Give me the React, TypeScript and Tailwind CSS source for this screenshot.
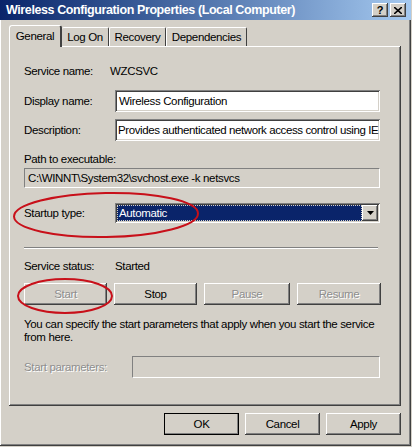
import React from "react";

const font = { fontFamily: '"Liberation Sans", Arial, sans-serif' };

const raised =
  "shadow-[inset_-1px_-1px_#404040,inset_1px_1px_#ffffff,inset_-2px_-2px_#808080,inset_2px_2px_#d4d0c8]";
const sunken =
  "shadow-[inset_1px_1px_#808080,inset_-1px_-1px_#ffffff,inset_2px_2px_#404040,inset_-2px_-2px_#d4d0c8]";

function Btn({ label, disabled, width, isDefault }: { label: string; disabled?: boolean; width: string; isDefault?: boolean }) {
  return (
    <div className={`${width} shrink-0 h-[22px] ${isDefault ? "outline outline-1 outline-black -outline-offset-1" : ""} bg-[#d4d0c8] ${raised} flex items-center justify-center ${disabled ? "text-[#8e8e8e] [text-shadow:1px_1px_0_#ffffff]" : "text-black"}`}>
      {label}
    </div>
  );
}

export default function App() {
  return (
    <div style={font} className="relative w-[412px] h-[447px] bg-[#d4d0c8] text-black text-[11.5px] tracking-[-0.35px] leading-[14px] overflow-hidden">
      <div className={`w-[411px] h-[446px] flex flex-col px-[2px] ${raised}`}>
        {/* Title bar */}
        <div className="h-[20px] -mx-[2px] flex items-center bg-gradient-to-r from-[#0a246a] to-[#a6caf0] pl-[6px] pr-[5px]">
          <span className="text-white font-bold text-[12.5px] tracking-[-0.4px] flex-1">Wireless Configuration Properties (Local Computer)</span>
          <div className={`w-[16px] h-[14px] bg-[#d4d0c8] ${raised} flex items-center justify-center text-[11px] font-bold leading-none tracking-normal`}>?</div>
          <div className={`ml-[2px] w-[16px] h-[14px] bg-[#d4d0c8] ${raised} flex items-center justify-center`}>
            <svg width="8" height="7" viewBox="0 0 8 7">
              <path d="M0 0 L8 7 M8 0 L0 7" stroke="#000" strokeWidth="1.6" />
            </svg>
          </div>
        </div>

        {/* Tabs */}
        <div className="mt-[5px] ml-[7px] h-[21px] flex items-end relative z-10">
          <div className="w-[53px] h-[22px] -mb-[1px] bg-[#d4d0c8] border-t border-l border-white border-r-2 border-r-[#404040] rounded-t-[3px] flex items-center justify-center pb-[2px]">General</div>
          <div className="w-[47px] h-[19px] border-t border-white border-r border-r-[#404040] rounded-t-[2px] flex items-center justify-center">Log On</div>
          <div className="w-[57px] h-[19px] border-t border-l border-white border-r border-r-[#404040] rounded-t-[2px] flex items-center justify-center">Recovery</div>
          <div className="w-[81px] h-[19px] border-t border-l border-white border-r border-r-[#404040] rounded-t-[2px] flex items-center justify-center">Dependencies</div>
        </div>

        {/* Panel */}
        <div className={`ml-[7px] w-[392px] h-[360px] ${raised} flex flex-col pl-[15px] pr-[21px]`}>
          <div className="mt-[16px] h-[18px] flex items-center">
            <span className="w-[86px] shrink-0">Service name:</span>
            <span>WZCSVC</span>
          </div>
          <div className="mt-[10px] h-[22px] flex items-center">
            <span className="w-[91px] shrink-0">Display name:</span>
            <div className={`flex-1 h-[22px] bg-white ${sunken} flex items-center pl-[4px]`}>Wireless Configuration</div>
          </div>
          <div className="mt-[7px] h-[22px] flex items-center">
            <span className="w-[91px] shrink-0">Description:</span>
            <div className={`flex-1 min-w-0 h-[22px] bg-white ${sunken} flex items-center pl-[3px] whitespace-nowrap tracking-[-0.4px]`}>Provides authenticated network access control using IE</div>
          </div>
          <div className="mt-[11px] h-[14px] flex items-center">Path to executable:</div>
          <div className="mt-[2px] h-[20px] border border-[#808080] border-r-white border-b-white flex items-center pl-[3px]">C:\WINNT\System32\svchost.exe -k netsvcs</div>
          <div className="mt-[15px] h-[20px] flex items-center">
            <span className="w-[91px] shrink-0">Startup type:</span>
            <div className={`flex-1 h-[20px] bg-white ${sunken} p-[2px] flex`}>
              <div className="flex-1 bg-[#0a246a] text-white flex items-center pl-[2px] outline outline-1 outline-dotted outline-[#d4d0c8] -outline-offset-1">Automatic</div>
              <div className={`w-[16px] bg-[#d4d0c8] ${raised} flex items-center justify-center`}>
                <svg width="7" height="4" viewBox="0 0 7 4"><path d="M0 0 H7 L3.5 4 Z" fill="#000" /></svg>
              </div>
            </div>
          </div>
          <div className="mt-[24px] h-[2px] border-t border-[#808080] border-b border-b-white mr-[2px]" />
          <div className="mt-[9px] h-[16px] flex items-center">
            <span className="w-[91px] shrink-0">Service status:</span>
            <span>Started</span>
          </div>
          <div className="mt-[9px] flex gap-[7px]">
            <Btn label="Start" disabled width="w-[83px]" />
            <Btn label="Stop" width="w-[83px]" />
            <Btn label="Pause" disabled width="w-[86px]" />
            <Btn label="Resume" disabled width="w-[84px]" />
          </div>
          <p className="mt-[13px] leading-[13px] -mr-[14px]">
            You can specify the start parameters that apply when you start the service
            <br />
            from here.
          </p>
          <div className="mt-[12px] h-[22px] flex items-center">
            <span className="w-[108px] shrink-0 text-[#8e8e8e] [text-shadow:1px_1px_0_#ffffff]">Start parameters:</span>
            <div className="flex-1 h-[22px] border border-[#808080] border-r-white border-b-white" />
          </div>
        </div>

        {/* Bottom buttons */}
        <div className="mt-[7px] flex justify-end gap-[6px] pr-[8px]">
          <Btn label="OK" width="w-[75px]" isDefault />
          <Btn label="Cancel" width="w-[75px]" />
          <Btn label="Apply" width="w-[75px]" />
        </div>
      </div>

      {/* Red annotation ellipses */}
      <svg className="absolute left-0 top-0 pointer-events-none" width="412" height="447">
        <ellipse cx="106" cy="215" rx="92" ry="22" fill="none" stroke="#c8101a" strokeWidth="2" transform="rotate(-1 106 215)" />
        <ellipse cx="65" cy="296" rx="47" ry="17" fill="none" stroke="#c8101a" strokeWidth="2" />
      </svg>
    </div>
  );
}
